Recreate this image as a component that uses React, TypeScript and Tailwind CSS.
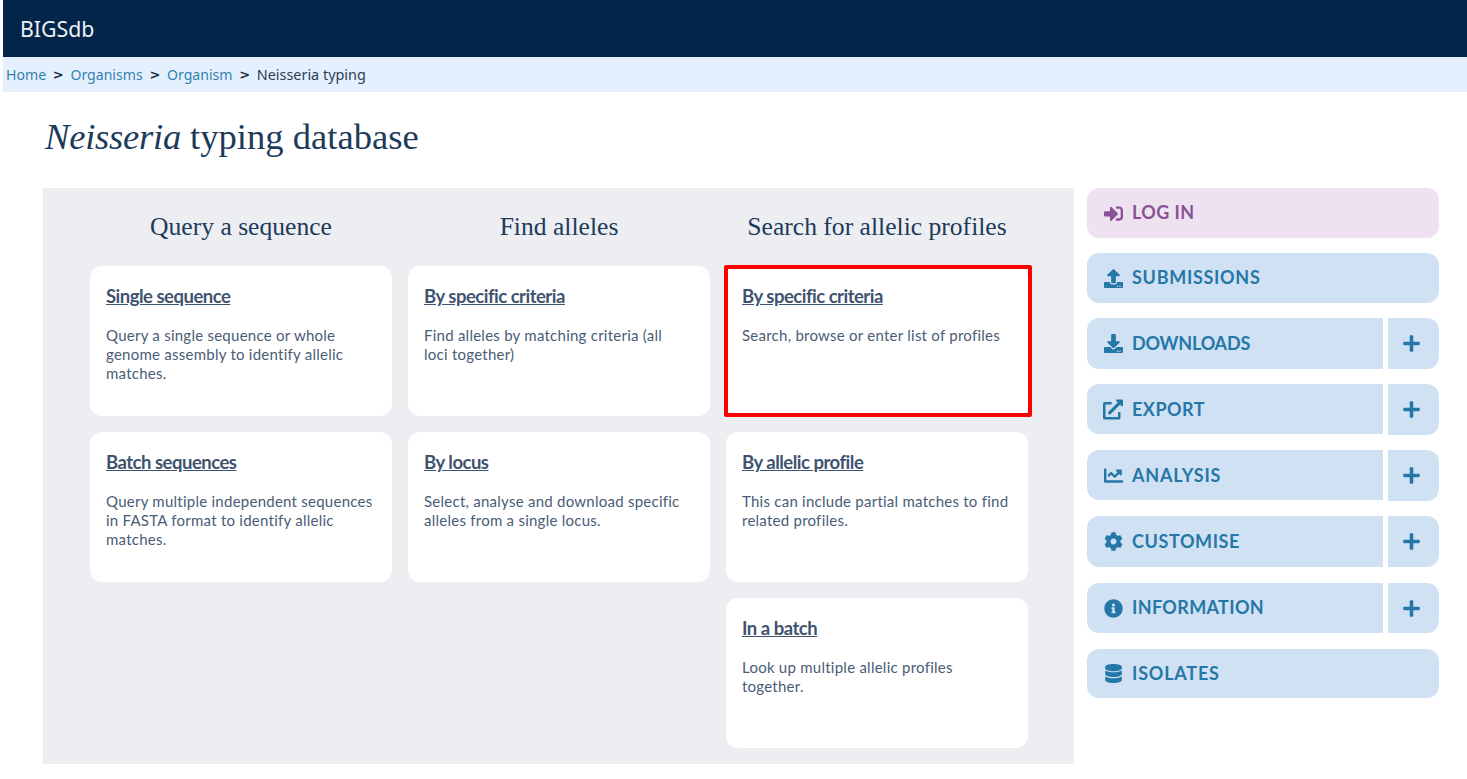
import React from "react";
import {
   FaChartLine,
   FaCog,
   FaDatabase,
   FaDownload,
   FaExternalLinkAlt,
   FaInfoCircle,
   FaPlus,
   FaSignInAlt,
   FaUpload,
} from "react-icons/fa";

const columns = [
   {
      title: "Query a sequence",
      cards: [
         { title: "Single sequence", text: "Query a single sequence or whole genome assembly to identify allelic matches." },
         { title: "Batch sequences", text: "Query multiple independent sequences in FASTA format to identify allelic matches." },
      ],
   },
   {
      title: "Find alleles",
      cards: [
         { title: "By specific criteria", text: "Find alleles by matching criteria (all loci\u00a0together)" },
         { title: "By locus", text: "Select, analyse and download specific alleles from a single locus." },
      ],
   },
   {
      title: "Search for allelic profiles",
      cards: [
         { title: "By specific criteria", text: "Search, browse or enter list of profiles", marked: true },
         { title: "By allelic profile", text: "This can include partial matches to find related profiles." },
         { title: "In a batch", text: "Look up multiple allelic profiles together." },
      ],
   },
];

const menu = [
   { label: "SUBMISSIONS", icon: <FaUpload />, h: "h-[50px]", track: "tracking-[0.7px] pb-px" },
   { label: "DOWNLOADS", icon: <FaDownload />, h: "h-[51px]", track: "tracking-[-0.2px] pb-px", plus: true },
   { label: "EXPORT", icon: <FaExternalLinkAlt className="text-[21px]" />, h: "h-[51px]", track: "tracking-[0.5px]", short: true, plus: true },
   { label: "ANALYSIS", icon: <FaChartLine />, h: "h-[51px]", track: "tracking-[0.8px]", short: true, plus: true },
   { label: "CUSTOMISE", icon: <FaCog />, h: "h-[51px]", track: "tracking-[0.6px] pb-px", plus: true },
   { label: "INFORMATION", icon: <FaInfoCircle />, h: "mt-px h-[50px]", track: "tracking-[0.35px] pb-px", plus: true },
   { label: "ISOLATES", icon: <FaDatabase />, h: "mt-px h-[49px]", track: "tracking-[0.8px] pb-px" },
];

function Card({ title, text, marked }: { title: string; text: string; marked?: boolean }) {
   return (
      <div className="relative h-[150px] rounded-xl bg-white px-4 pt-[18px]">
         <a className="block w-fit text-[18.5px] leading-[25px] font-bold tracking-[-0.5px] text-[#3f5370] underline">
            {title}
         </a>
         <p className="mt-[17px] text-[15px] leading-[19px] tracking-[0.25px] text-[#4a5c76]">{text}</p>
         {marked && (
            <div className="absolute -top-px -right-1 -bottom-px -left-0.5 rounded-[2px] border-4 border-[#ff0000]" />
         )}
      </div>
   );
}

function Crumb() {
   return <span className="mx-[6.7px] font-['DejaVu_Sans',sans-serif] text-[13px] font-bold text-[#1f2d3d]">&gt;</span>;
}

function MenuRow({
   label,
   icon,
   h,
   track,
   plus,
   short,
}: {
   label: string;
   icon: React.ReactNode;
   h: string;
   track: string;
   plus?: boolean;
   short?: boolean;
}) {
   return (
      <div className={`flex ${h} gap-[5px] text-[#2577a8]`}>
         <div
            className={`flex flex-1 items-center gap-[9px] bg-[#d0e1f3] pl-4 ${plus ? "rounded-l-xl" : "rounded-xl"} ${short ? "h-[50px]" : ""}`}
         >
            <span className="flex w-5 justify-center text-[19px]">{icon}</span>
            <span className={`text-[18px] font-bold ${track}`}>{label}</span>
         </div>
         {plus && (
            <div className="flex w-[51px] items-center justify-center rounded-r-xl bg-[#d0e1f3] pr-1 text-[19px]">
               <FaPlus />
            </div>
         )}
      </div>
   );
}

export default function App() {
   return (
      <div className="h-[779px] overflow-hidden bg-white pl-[3px] font-['Lato',sans-serif]">
         {/* Header */}
         <div className="flex h-[57px] items-center bg-[#03254a] pl-[17px] font-['Noto_Sans',sans-serif] text-[21.3px] text-[#eef1f4]">
            BIGSdb
         </div>
         <div className="flex h-[35px] items-center bg-[#e4f0fd] pl-[3px] font-['Noto_Sans',sans-serif] text-[14.1px] text-[#3481ad]">
            <a>Home</a>
            <Crumb />
            <a>Organisms</a>
            <Crumb />
            <a>Organism</a>
            <Crumb />
            <span className="text-[14.4px] text-[#2c3e55]">Neisseria typing</span>
         </div>

         <h1 className="mt-[22px] ml-[42px] font-['Liberation_Serif',serif] text-[36.6px] leading-[46px] text-[#203a5a]">
            <em className="tracking-[-0.25px]">Neisseria</em> typing database
         </h1>

         <div className="mt-[28px] ml-10 flex items-start gap-[13px]">
            {/* Main panel */}
            <div className="grid h-[576px] w-[1031px] grid-cols-[302px_302px_302px] gap-x-4 bg-[#edeef2] pt-[21px] pl-[47px]">
               {columns.map((col) => (
                  <div key={col.title} className="flex flex-col">
                     <h2 className="mb-[22px] text-center font-['Liberation_Serif',serif] text-[25.6px] leading-[35px] text-[#203a5a]">
                        {col.title}
                     </h2>
                     <div className="flex flex-col gap-4">
                        {col.cards.map((card) => (
                           <Card key={card.title + card.text} {...card} />
                        ))}
                     </div>
                  </div>
               ))}
            </div>

            {/* Sidebar */}
            <div className="flex w-[352px] flex-col gap-[15px]">
               <div className="flex h-[50px] items-center gap-[9px] rounded-xl bg-[#efe2f0] pl-4 text-[#8a5295]">
                  <span className="flex w-5 justify-center text-[19px]">
                     <FaSignInAlt />
                  </span>
                  <span className="pb-px text-[18px] font-bold tracking-[0.4px]">LOG IN</span>
               </div>
               {menu.map((item) => (
                  <MenuRow key={item.label} {...item} />
               ))}
            </div>
         </div>
      </div>
   );
}
